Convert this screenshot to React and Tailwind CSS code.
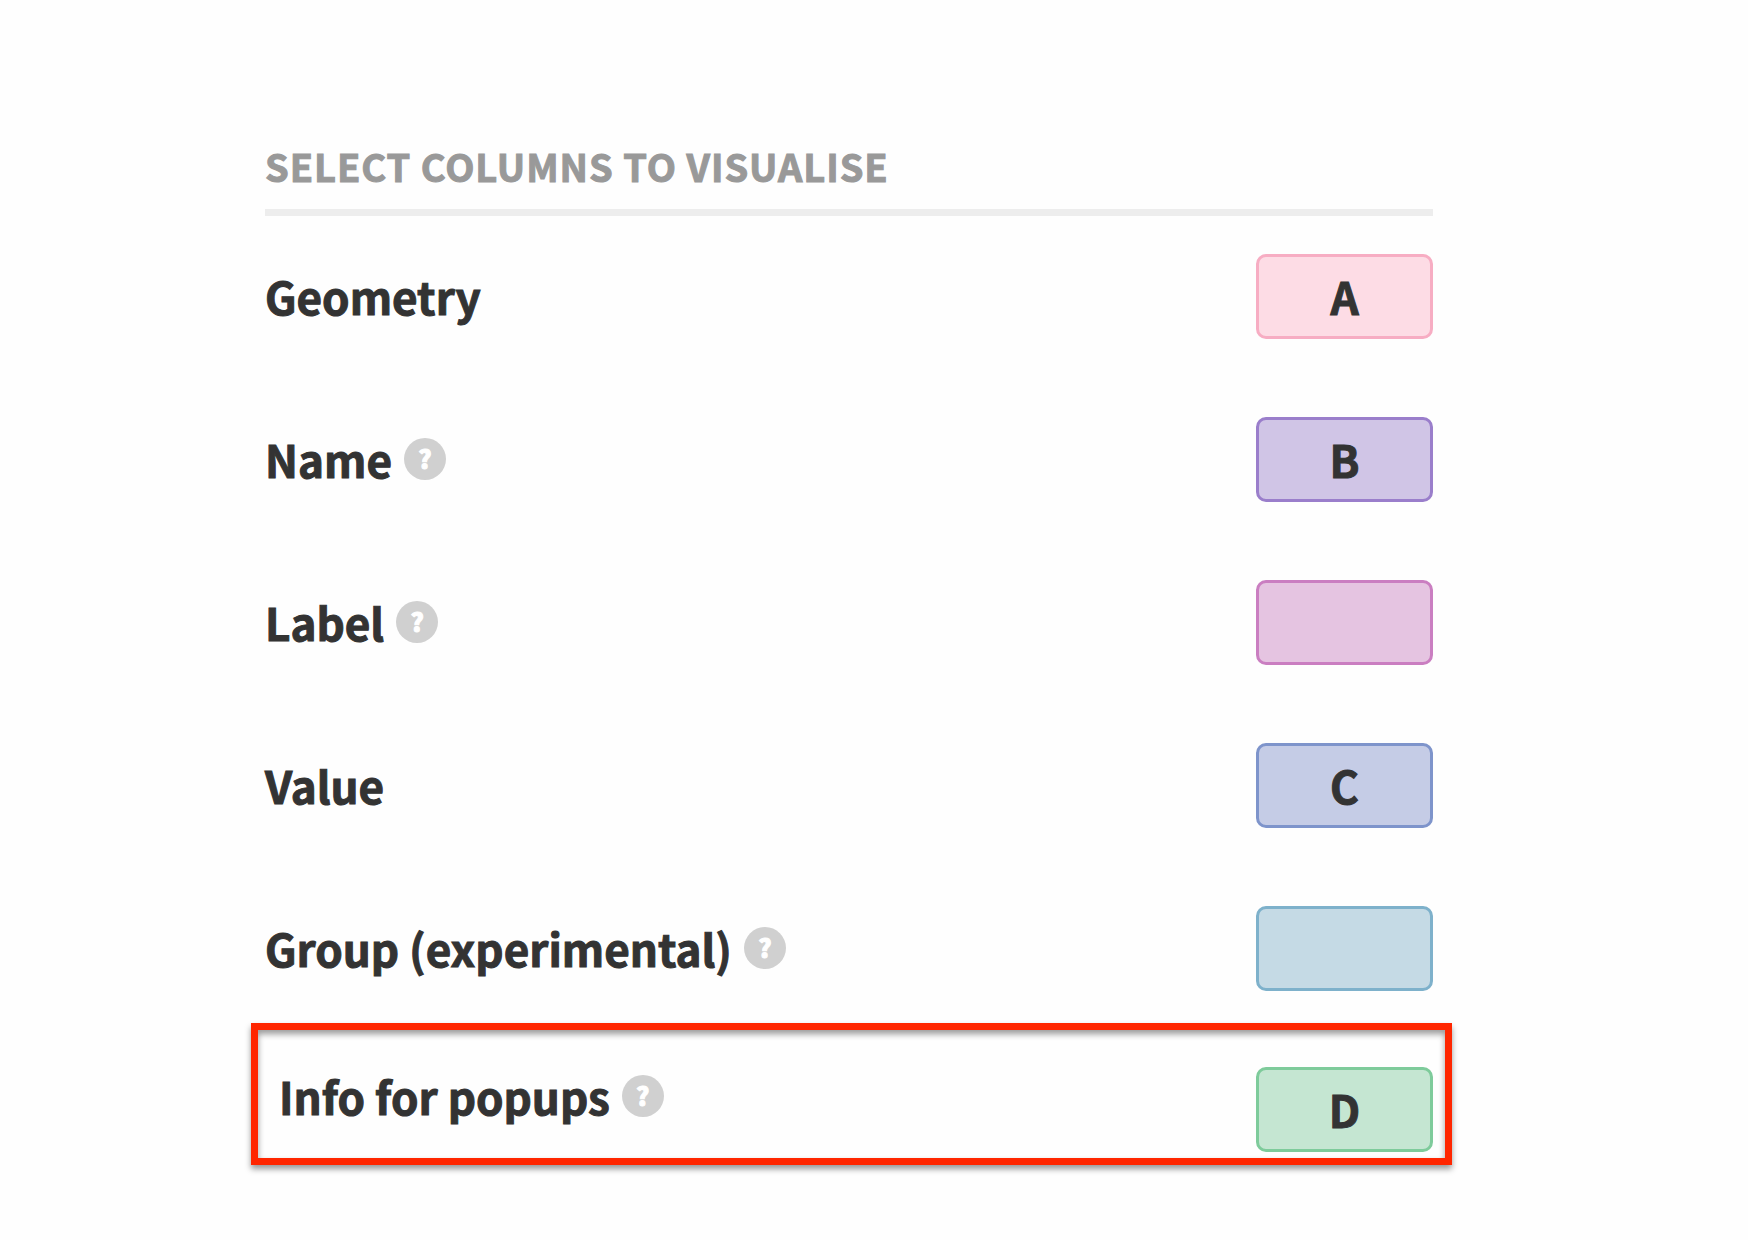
import React from "react";

const columns = [
  { id: "geometry", label: "Geometry", value: "A", help: false, box: "bg-[#fddce5] border-[#f7adc3]" },
  { id: "name", label: "Name", value: "B", help: true, box: "bg-[#d0c5e6] border-[#9a7ecb]" },
  { id: "label", label: "Label", value: "", help: true, box: "bg-[#e5c4e1] border-[#ca7ec1]" },
  { id: "value", label: "Value", value: "C", help: false, box: "bg-[#c5cce6] border-[#7e94cb]" },
  { id: "group", label: "Group (experimental)", value: "", help: true, box: "bg-[#c5dae5] border-[#7eb1cb]" },
];

const popups = { id: "popups", label: "Info for popups", value: "D", help: true, box: "bg-[#c5e6d2] border-[#7ecb9b]" };

function HelpButton({ topic }) {
  return (
    <button
      type="button"
      aria-label={`Help: ${topic}`}
      className="flex size-[42px] shrink-0 items-center justify-center rounded-full bg-[#d0d0d0] pb-0.5 text-[25px] leading-none font-black text-white [-webkit-text-stroke:1px_white]"
    >
      ?
    </button>
  );
}

function ColumnField({ column }) {
  return (
    <>
      <div className="flex h-[84px] items-center gap-3">
        <label htmlFor={column.id} className="text-[44px] leading-[84px] font-bold whitespace-nowrap [-webkit-text-stroke:1px_#333]">
          {column.label}
        </label>
        {column.help && <HelpButton topic={column.label} />}
      </div>
      <input
        id={column.id}
        type="text"
        defaultValue={column.value}
        className={`h-[85px] w-[177px] rounded-[10px] border-[3px] pb-0.5 text-center text-[44px] leading-[76px] font-bold outline-none [-webkit-text-stroke:1px_#333] ${column.box}`}
      />
    </>
  );
}

export default function App() {
  return (
    <main className="min-h-screen bg-[#fefefe] pt-[138px] pr-[315px] pb-10 pl-[265px] font-['Noto_Sans_CJK_SC',sans-serif] text-[#333]">
      <h1 className="border-b-[7px] border-[#ededed] pb-[15px] text-[38px] leading-[56px] font-bold text-[#999] uppercase tracking-wide [-webkit-text-stroke:1px_#999]">
        Select columns to visualise
      </h1>
      <div className="mt-[38px] flex flex-col gap-[78px]">
        {columns.map((column) => (
          <div key={column.id} className="flex items-start justify-between">
            <ColumnField column={column} />
          </div>
        ))}
      </div>
      <div className="mt-8 -mr-[19px] -ml-[14px] flex items-end justify-between border-[7px] border-[#ff2600] pt-[37px] pr-3 pb-1.5 pl-[21px] shadow-[0_4px_6px_rgba(0,0,0,0.4),inset_0_4px_6px_rgba(0,0,0,0.4)]">
        <div className="contents [&>div]:-mt-[13px] [&>div]:self-start">
          <ColumnField column={popups} />
        </div>
      </div>
    </main>
  );
}
